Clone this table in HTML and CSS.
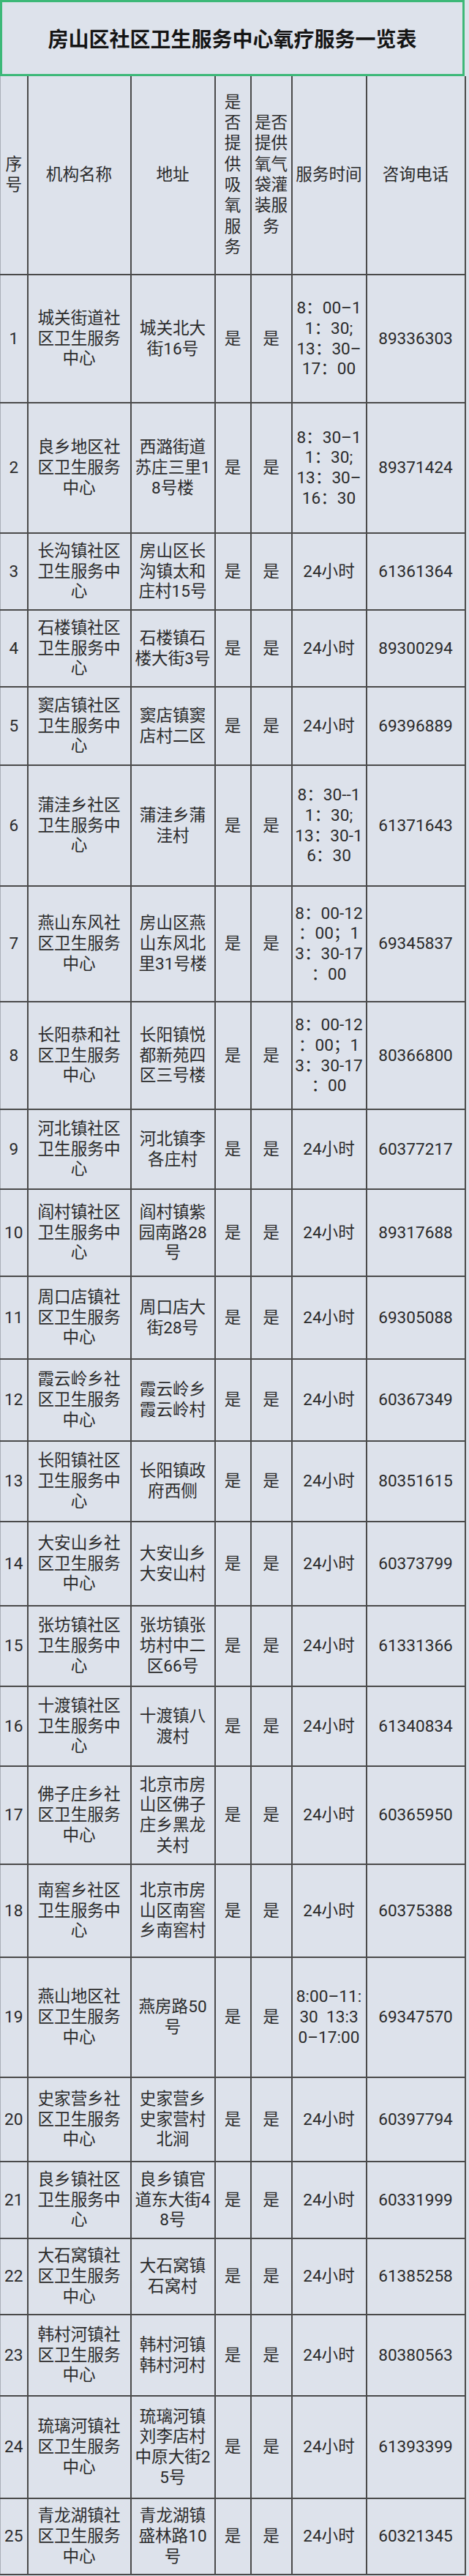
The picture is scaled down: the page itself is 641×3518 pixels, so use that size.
FILE: index.html
```html
<!DOCTYPE html>
<html lang="zh-CN">
<head>
<meta charset="utf-8">
<title>房山区社区卫生服务中心氧疗服务一览表</title>
<link rel="stylesheet" href="styles.css">
</head>
<body>
<div class="sheet">
  <div class="title">房山区社区卫生服务中心氧疗服务一览表</div>
  <table class="grid">
    <colgroup>
      <col class="c-no"><col class="c-name"><col class="c-addr"><col class="c-o2"><col class="c-bag"><col class="c-time"><col class="c-tel">
    </colgroup>
    <thead>
      <tr style="height:271px">
        <th class="first">序<br>号</th>
        <th>机构名称</th>
        <th>地址</th>
        <th>是<br>否<br>提<br>供<br>吸<br>氧<br>服<br>务</th>
        <th>是否<br>提供<br>氧气<br>袋灌<br>装服<br>务</th>
        <th>服务时间</th>
        <th>咨询电话</th>
      </tr>
    </thead>
    <tbody>
      <tr style="height:175px"><td class="first">1</td><td>城关街道社<br>区卫生服务<br>中心</td><td>城关北大<br>街16号</td><td>是</td><td>是</td><td>8：00–1<br>1：30;<br>13：30–<br>17：00</td><td>89336303</td></tr>
      <tr style="height:178px"><td class="first">2</td><td>良乡地区社<br>区卫生服务<br>中心</td><td>西潞街道<br>苏庄三里1<br>8号楼</td><td>是</td><td>是</td><td>8：30–1<br>1：30;<br>13：30–<br>16：30</td><td>89371424</td></tr>
      <tr style="height:105px"><td class="first">3</td><td>长沟镇社区<br>卫生服务中<br>心</td><td>房山区长<br>沟镇太和<br>庄村15号</td><td>是</td><td>是</td><td>24小时</td><td>61361364</td></tr>
      <tr style="height:105px"><td class="first">4</td><td>石楼镇社区<br>卫生服务中<br>心</td><td>石楼镇石<br>楼大街3号</td><td>是</td><td>是</td><td>24小时</td><td>89300294</td></tr>
      <tr style="height:107px"><td class="first">5</td><td>窦店镇社区<br>卫生服务中<br>心</td><td>窦店镇窦<br>店村二区</td><td>是</td><td>是</td><td>24小时</td><td>69396889</td></tr>
      <tr style="height:165px"><td class="first">6</td><td>蒲洼乡社区<br>卫生服务中<br>心</td><td>蒲洼乡蒲<br>洼村</td><td>是</td><td>是</td><td>8：30--1<br>1：30;<br>13：30-1<br>6：30</td><td>61371643</td></tr>
      <tr style="height:158px"><td class="first">7</td><td>燕山东风社<br>区卫生服务<br>中心</td><td>房山区燕<br>山东风北<br>里31号楼</td><td>是</td><td>是</td><td>8：00-12<br>：00；1<br>3：30-17<br>：00</td><td>69345837</td></tr>
      <tr style="height:147px"><td class="first">8</td><td>长阳恭和社<br>区卫生服务<br>中心</td><td>长阳镇悦<br>都新苑四<br>区三号楼</td><td>是</td><td>是</td><td>8：00-12<br>：00；1<br>3：30-17<br>：00</td><td>80366800</td></tr>
      <tr style="height:109px"><td class="first">9</td><td>河北镇社区<br>卫生服务中<br>心</td><td>河北镇李<br>各庄村</td><td>是</td><td>是</td><td>24小时</td><td>60377217</td></tr>
      <tr style="height:119px"><td class="first">10</td><td>阎村镇社区<br>卫生服务中<br>心</td><td>阎村镇紫<br>园南路28<br>号</td><td>是</td><td>是</td><td>24小时</td><td>89317688</td></tr>
      <tr style="height:113px"><td class="first">11</td><td>周口店镇社<br>区卫生服务<br>中心</td><td>周口店大<br>街28号</td><td>是</td><td>是</td><td>24小时</td><td>69305088</td></tr>
      <tr style="height:112px"><td class="first">12</td><td>霞云岭乡社<br>区卫生服务<br>中心</td><td>霞云岭乡<br>霞云岭村</td><td>是</td><td>是</td><td>24小时</td><td>60367349</td></tr>
      <tr style="height:110px"><td class="first">13</td><td>长阳镇社区<br>卫生服务中<br>心</td><td>长阳镇政<br>府西侧</td><td>是</td><td>是</td><td>24小时</td><td>80351615</td></tr>
      <tr style="height:115px"><td class="first">14</td><td>大安山乡社<br>区卫生服务<br>中心</td><td>大安山乡<br>大安山村</td><td>是</td><td>是</td><td>24小时</td><td>60373799</td></tr>
      <tr style="height:110px"><td class="first">15</td><td>张坊镇社区<br>卫生服务中<br>心</td><td>张坊镇张<br>坊村中二<br>区66号</td><td>是</td><td>是</td><td>24小时</td><td>61331366</td></tr>
      <tr style="height:109px"><td class="first">16</td><td>十渡镇社区<br>卫生服务中<br>心</td><td>十渡镇八<br>渡村</td><td>是</td><td>是</td><td>24小时</td><td>61340834</td></tr>
      <tr style="height:134px"><td class="first">17</td><td>佛子庄乡社<br>区卫生服务<br>中心</td><td>北京市房<br>山区佛子<br>庄乡黑龙<br>关村</td><td>是</td><td>是</td><td>24小时</td><td>60365950</td></tr>
      <tr style="height:127px"><td class="first">18</td><td>南窖乡社区<br>卫生服务中<br>心</td><td>北京市房<br>山区南窖<br>乡南窖村</td><td>是</td><td>是</td><td>24小时</td><td>60375388</td></tr>
      <tr style="height:164px"><td class="first">19</td><td>燕山地区社<br>区卫生服务<br>中心</td><td>燕房路50<br>号</td><td>是</td><td>是</td><td>8:00–11:<br>30&nbsp;&nbsp;13:3<br>0–17:00</td><td>69347570</td></tr>
      <tr style="height:115px"><td class="first">20</td><td>史家营乡社<br>区卫生服务<br>中心</td><td>史家营乡<br>史家营村<br>北涧</td><td>是</td><td>是</td><td>24小时</td><td>60397794</td></tr>
      <tr style="height:105px"><td class="first">21</td><td>良乡镇社区<br>卫生服务中<br>心</td><td>良乡镇官<br>道东大街4<br>8号</td><td>是</td><td>是</td><td>24小时</td><td>60331999</td></tr>
      <tr style="height:104px"><td class="first">22</td><td>大石窝镇社<br>区卫生服务<br>中心</td><td>大石窝镇<br>石窝村</td><td>是</td><td>是</td><td>24小时</td><td>61385258</td></tr>
      <tr style="height:111px"><td class="first">23</td><td>韩村河镇社<br>区卫生服务<br>中心</td><td>韩村河镇<br>韩村河村</td><td>是</td><td>是</td><td>24小时</td><td>80380563</td></tr>
      <tr style="height:140px"><td class="first">24</td><td>琉璃河镇社<br>区卫生服务<br>中心</td><td>琉璃河镇<br>刘李店村<br>中原大街2<br>5号</td><td>是</td><td>是</td><td>24小时</td><td>61393399</td></tr>
      <tr style="height:104px"><td class="first">25</td><td>青龙湖镇社<br>区卫生服务<br>中心</td><td>青龙湖镇<br>盛林路10<br>号</td><td>是</td><td>是</td><td>24小时</td><td>60321345</td></tr>
    </tbody>
  </table>
</div>
</body>
</html>
```
FILE: styles.css
```css
html, body {
  margin: 0;
  padding: 0;
  background: #dde2eb;
}

body {
  font-family: "Roboto", "Noto Sans CJK SC", "Noto Sans", sans-serif;
  color: #2b2b2b;
}

.sheet {
  width: 635px;
}

.title {
  box-sizing: border-box;
  height: 104px;
  border: 3px solid #3cb878;
  display: flex;
  align-items: center;
  justify-content: center;
  font-family: "Noto Sans CJK SC", sans-serif;
  font-size: 28px;
  font-weight: 700;
  color: #151515;
}

.grid {
  width: 635px;
  border-collapse: collapse;
  table-layout: fixed;
}

.c-no { width: 37px; }
.c-name { width: 141px; }
.c-addr { width: 115px; }
.c-o2 { width: 49px; }
.c-bag { width: 56px; }
.c-time { width: 102px; }
.c-tel { width: 135px; }

.grid th,
.grid td {
  border: 2px solid #4a4a4a;
  padding: 0;
  text-align: center;
  vertical-align: middle;
  white-space: nowrap;
  font-size: 22.6px;
  line-height: 27.7px;
  font-weight: 400;
  overflow: hidden;
}

.grid th {
  border-top: 0;
  line-height: 28.3px;
}

.grid .first {
  border-left: 1px solid #a9afb8;
}
```
